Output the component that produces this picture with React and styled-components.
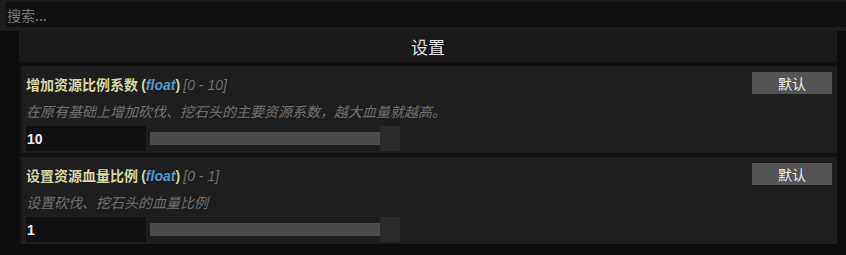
import React from "react";
import styled, { createGlobalStyle } from "styled-components";

const Global = createGlobalStyle`
  html, body { margin: 0; padding: 0; background: #0e0e0e; }
  body { font-family: "Segoe UI", "Liberation Sans", "Noto Sans CJK SC", sans-serif; }
  * { box-sizing: border-box; }
`;

const Page = styled.div`
  width: 846px;
  height: 255px;
  display: flex;
  flex-direction: column;
  background: #0e0e0e;
  overflow: hidden;
`;

const SearchRow = styled.div`
  background: #1c1c1c;
  padding: 2px 0 4px 6px;
`;

const SearchInput = styled.input`
  display: block;
  width: 100%;
  height: 25px;
  border: none;
  outline: none;
  background: #111111;
  color: #ddd;
  padding: 0 0 0 1px;
  font-family: "Noto Sans CJK SC", sans-serif;
  font-size: 14px;
  &::placeholder { color: #767676; }
`;

const Main = styled.div`
  padding: 0 9px 0 19px;
`;

const Panel = styled.div`
  background: #121212;
  display: flex;
  flex-direction: column;
`;

const Header = styled.div`
  height: 31px;
  background: #1a1a1a;
  display: flex;
  align-items: center;
  justify-content: center;
  color: #e0e0e0;
  font-family: "Noto Sans CJK SC", sans-serif;
  font-size: 17px;
`;

const List = styled.div`
  display: flex;
  flex-direction: column;
  gap: 4px;
  padding: 4px 0 0 2px;
`;

const Card = styled.div`
  background: #1e1e1e;
  padding: 6px 5px 2px 5px;
`;

const TopRow = styled.div`
  display: flex;
  align-items: center;
  justify-content: space-between;
  height: 22px;
`;

const Title = styled.div`
  font-family: "Noto Sans CJK SC", sans-serif;
  font-size: 14px;
  font-weight: 700;
  color: #d6d6a4;
  padding-top: 1px;
  white-space: nowrap;
`;

const TypeName = styled.span`
  color: #4f9bd3;
  font-style: italic;
  font-family: "Liberation Sans", sans-serif;
`;

const Range = styled.span`
  color: #6f6f6f;
  font-style: italic;
  font-weight: 400;
  font-family: "Liberation Sans", sans-serif;
`;

const Paren = styled.span`
  font-family: "Liberation Sans", sans-serif;
`;

const DefaultButton = styled.button`
  width: 80px;
  height: 22px;
  border: none;
  background: #545454;
  color: #eeeeee;
  font-family: "Noto Sans CJK SC", sans-serif;
  font-size: 14px;
  padding: 0;
  cursor: pointer;
`;

const Desc = styled.div`
  font-family: "Noto Sans CJK SC", sans-serif;
  font-size: 14px;
  font-style: italic;
  color: #707070;
  line-height: 20px;
  margin: 7px 0 5px;
  white-space: nowrap;
`;

const ValueRow = styled.div`
  display: flex;
  align-items: center;
  gap: 4px;
`;

const ValueInput = styled.input`
  width: 120px;
  height: 25px;
  border: none;
  outline: none;
  background: #111111;
  color: #f2f2f2;
  font-family: "Liberation Sans", sans-serif;
  font-size: 14px;
  font-weight: 700;
  padding: 0 0 0 1px;
`;

const Slider = styled.div`
  position: relative;
  width: 250px;
  height: 25px;
  display: flex;
  align-items: center;
`;

const Track = styled.div`
  width: 230px;
  height: 13px;
  background: #4b4b4b;
`;

const Thumb = styled.div`
  position: absolute;
  top: 0;
  width: 20px;
  height: 25px;
  background: #2a2a2a;
`;

const settings = [
  {
    name: "增加资源比例系数",
    type: "float",
    min: 0,
    max: 10,
    value: 10,
    desc: "在原有基础上增加砍伐、挖石头的主要资源系数，越大血量就越高。",
  },
  {
    name: "设置资源血量比例",
    type: "float",
    min: 0,
    max: 1,
    value: 1,
    desc: "设置砍伐、挖石头的血量比例",
  },
];

function SettingCard({ s }) {
  const pct = (s.value - s.min) / (s.max - s.min);
  return (
    <Card>
      <TopRow>
        <Title>
          {s.name} <Paren>(</Paren>
          <TypeName>{s.type}</TypeName>
          <Paren>)</Paren> <Range>[{s.min} - {s.max}]</Range>
        </Title>
        <DefaultButton>默认</DefaultButton>
      </TopRow>
      <Desc>{s.desc}</Desc>
      <ValueRow>
        <ValueInput defaultValue={String(s.value)} />
        <Slider>
          <Track />
          <Thumb style={{ left: `${pct * 230}px` }} />
        </Slider>
      </ValueRow>
    </Card>
  );
}

export default function App() {
  return (
    <Page>
      <Global />
      <SearchRow>
        <SearchInput placeholder="搜索..." />
      </SearchRow>
      <Main>
        <Panel>
          <Header>设置</Header>
          <List>
            {settings.map((s) => (
              <SettingCard key={s.name} s={s} />
            ))}
          </List>
        </Panel>
      </Main>
    </Page>
  );
}
